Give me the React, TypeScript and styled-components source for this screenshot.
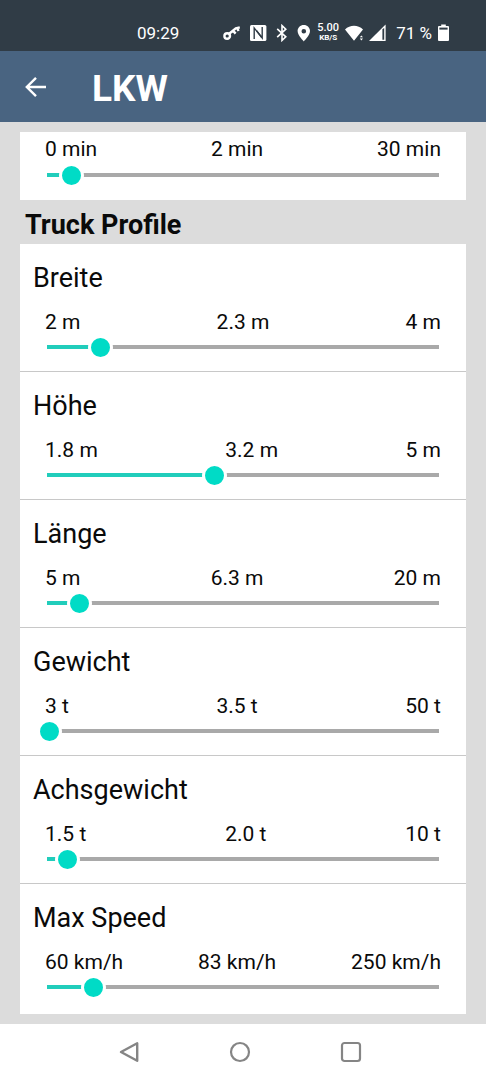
import React, { useId, useState } from "react";
import styled, { createGlobalStyle } from "styled-components";

const GlobalStyle = createGlobalStyle`
  *, *::before, *::after { box-sizing: border-box; }
  body {
    margin: 0;
    background: #dcdcdc;
    color: #0a0a0a;
    font-family: Roboto, "Liberation Sans", sans-serif;
  }
`;

const Screen = styled.div`
  display: flex;
  flex-direction: column;
  min-height: 100vh;
`;

const StatusBar = styled.div`
  display: flex;
  align-items: center;
  justify-content: space-between;
  height: 51px;
  padding: 14px 37px 0 137px;
  background: #303c46;
  color: #fff;
  font-size: 17px;
  line-height: 20px;
`;

const StatusIcons = styled.div`
  display: flex;
  align-items: center;
  gap: 6px;

  svg {
    display: block;
  }
`;

const Throughput = styled.div`
  width: 22px;
  font-size: 11px;
  font-weight: 500;
  line-height: 10px;
  text-align: center;
  white-space: nowrap;
`;

const ThroughputUnit = styled.div`
  font-size: 8px;
  font-weight: 700;
  line-height: 9px;
`;

const BatteryLevel = styled.span`
  white-space: nowrap;
`;

const AppBar = styled.header`
  display: flex;
  align-items: center;
  gap: 44px;
  height: 71px;
  padding: 0 24px;
  background: #496481;
  color: #fff;
`;

const BackButton = styled.button`
  display: flex;
  padding: 0;
  border: 0;
  background: none;
  color: inherit;
`;

const Title = styled.h1`
  margin: 0;
  padding-top: 4px;
  font-size: 37px;
  font-weight: 700;
  line-height: 44px;
`;

const Content = styled.main`
  flex: 1;
  padding: 10px 20px;
`;

const Card = styled.section<{ $cut?: boolean }>`
  padding-bottom: ${(p) => (p.$cut ? 0 : 2)}px;
  background: #fff;
`;

const SectionTitle = styled.h2`
  margin: 0;
  padding: 9px 5px 3px;
  font-size: 27px;
  font-weight: 700;
  line-height: 32px;
`;

const Row = styled.div<{ $compact?: boolean }>`
  padding: ${(p) => (p.$compact ? 5 : 18)}px 13px 11px;
  border-bottom: 1px solid #c8c8c8;

  &:last-child {
    border-bottom-color: transparent;
  }
`;

const RowLabel = styled.label`
  display: block;
  margin-bottom: 16px;
  font-size: 27px;
  line-height: 32px;
`;

const Values = styled.div<{ $compact?: boolean }>`
  display: flex;
  justify-content: space-between;
  padding: 0 12px ${(p) => (p.$compact ? 1 : 0)}px;
  font-size: 21px;
  line-height: 25px;
`;

const Slider = styled.input`
  appearance: none;
  display: block;
  width: 100%;
  height: 25px;
  margin: 0;
  background:
    linear-gradient(#21cdbb, #21cdbb) 14px 10px / calc((100% - 25px) * var(--filled)) 4px no-repeat,
    linear-gradient(#a9a9a9, #a9a9a9) 14px 10px / calc(100% - 28px) 4px no-repeat;

  &::-webkit-slider-thumb {
    appearance: none;
    width: 25px;
    height: 25px;
    border: 3px solid #fff;
    border-radius: 50%;
    background: #00dbc6;
  }
`;

const NavBar = styled.nav`
  display: flex;
  align-items: center;
  justify-content: center;
  gap: 87px;
  height: 56px;
  padding-right: 6px;
  background: #fff;
`;

const NavButton = styled.button`
  display: flex;
  padding: 0;
  border: 0;
  background: none;
  color: #858585;
`;

type Setting = {
  label: string;
  min: number;
  max: number;
  initial: number;
  unit: string;
  digits: number;
};

const profile: Setting[] = [
  { label: "Breite", min: 2, max: 4, initial: 2.28, unit: "m", digits: 1 },
  { label: "Höhe", min: 1.8, max: 5, initial: 3.17, unit: "m", digits: 1 },
  { label: "Länge", min: 5, max: 20, initial: 6.31, unit: "m", digits: 1 },
  { label: "Gewicht", min: 3, max: 50, initial: 3.5, unit: "t", digits: 1 },
  { label: "Achsgewicht", min: 1.5, max: 10, initial: 1.97, unit: "t", digits: 1 },
  { label: "Max Speed", min: 60, max: 250, initial: 83, unit: "km/h", digits: 0 },
];

const pause: Setting = { label: "Minuten", min: 0, max: 30, initial: 2, unit: "min", digits: 0 };

function SettingRow({ setting, compact }: { setting: Setting; compact?: boolean }) {
  const { label, min, max, initial, unit, digits } = setting;
  const [value, setValue] = useState(initial);
  const id = useId();
  const style = { "--filled": (value - min) / (max - min) } as React.CSSProperties;

  return (
    <Row $compact={compact}>
      {!compact && <RowLabel htmlFor={id}>{label}</RowLabel>}
      <Values $compact={compact}>
        <span>{min} {unit}</span>
        <span>{value.toFixed(digits)} {unit}</span>
        <span>{max} {unit}</span>
      </Values>
      <Slider
        id={id}
        type="range"
        aria-label={compact ? label : undefined}
        min={min}
        max={max}
        step="any"
        value={value}
        style={style}
        onChange={(e) => setValue(Number(e.target.value))}
      />
    </Row>
  );
}

function KeyIcon() {
  return (
    <svg width="21" height="18" viewBox="0 0 21 18" fill="none" stroke="#fff">
      <circle cx="4.2" cy="12" r="2.8" strokeWidth="2.4" />
      <path d="M6.2 9.8 12.8 4.4 16.8 3.4M10 6.6l2.6 3M14 4l1.6 3" strokeWidth="2.4" />
    </svg>
  );
}

function NfcIcon() {
  return (
    <svg width="19" height="18" viewBox="0 0 19 18">
      <rect x="0" y="1" width="16.4" height="16" rx="1.5" fill="#fff" />
      <path d="M4.2 15V4l7.600 9.500" fill="none" stroke="#303c46" strokeWidth="1.4" />
      <path d="M12.200 3v11L6.600 6.800" fill="none" stroke="#303c46" strokeWidth="1.4" />
    </svg>
  );
}

function BluetoothIcon() {
  return (
    <svg width="16" height="18" viewBox="0 0 16 18" fill="none" stroke="#fff" strokeWidth="1.6">
      <path d="M2.2 4.800 10.800 12.800 7 16.400V1.600l3.800 3.600L2.200 13.200" />
    </svg>
  );
}

function PinIcon() {
  return (
    <svg width="14" height="18" viewBox="0 0 14 18">
      <path
        d="M6.8 1C3.3 1 .6 3.7.6 7.1c0 4.3 6.2 10.3 6.2 10.3S13 11.4 13 7.1C13 3.7 10.3 1 6.8 1Zm0 8.5a2.3 2.3 0 1 1 0-4.6 2.3 2.3 0 0 1 0 4.6Z"
        fill="#fff"
      />
    </svg>
  );
}

function WifiIcon() {
  return (
    <svg width="18" height="18" viewBox="0 0 18 18" fill="#fff">
      <path d="M0 5.4C5 .4 13 .4 18 5.400L14.200 10.200L9 16.800Z" />
      <path d="M14.800 13.200 16.400 11.400 18 13.200ZM14.800 14.600l1.600 1.800L18 14.600Z" />
    </svg>
  );
}

function SignalIcon() {
  return (
    <svg width="21" height="18" viewBox="0 0 21 18">
      <path d="M0 17 16.6 0.6V17Z" fill="#fff" />
      <path d="M13.4 5.200v10.600h1.800V4Z" fill="#303c46" />
    </svg>
  );
}

function BatteryIcon() {
  return (
    <svg width="11" height="18" viewBox="0 0 11 18">
      <path d="M3.2 0.5h4.6V2H10a1 1 0 0 1 1 1v13a1 1 0 0 1-1 1H1a1 1 0 0 1-1-1V3a1 1 0 0 1 1-1h2.2Z" fill="#fff" />
      <path d="M1.4 3.6h8.2v2H1.4Z" fill="#303c46" />
    </svg>
  );
}

export default function App() {
  return (
    <Screen>
      <GlobalStyle />
      <StatusBar>
        <span>09:29</span>
        <StatusIcons>
          <KeyIcon />
          <NfcIcon />
          <BluetoothIcon />
          <PinIcon />
          <Throughput>
            5.00
            <ThroughputUnit>KB/S</ThroughputUnit>
          </Throughput>
          <WifiIcon />
          <SignalIcon />
          <BatteryLevel>71 %</BatteryLevel>
          <BatteryIcon />
        </StatusIcons>
      </StatusBar>
      <AppBar>
        <BackButton aria-label="Zurück">
          <svg width="24" height="24" viewBox="0 0 24 24" fill="none" stroke="currentColor" strokeWidth="2.4">
            <path d="M22 12H3.5M12 2.8 2.8 12l9.2 9.2" />
          </svg>
        </BackButton>
        <Title>LKW</Title>
      </AppBar>
      <Content>
        <Card $cut>
          <SettingRow setting={pause} compact />
        </Card>
        <SectionTitle>Truck Profile</SectionTitle>
        <Card>
          {profile.map((setting) => (
            <SettingRow key={setting.label} setting={setting} />
          ))}
        </Card>
      </Content>
      <NavBar>
        <NavButton aria-label="Zurück">
          <svg width="24" height="24" viewBox="0 0 24 24" fill="none" stroke="currentColor" strokeWidth="2.4" strokeLinejoin="round">
            <path d="M20.2 3.3v17.4L4 12Z" />
          </svg>
        </NavButton>
        <NavButton aria-label="Startbildschirm">
          <svg width="24" height="24" viewBox="0 0 24 24" fill="none" stroke="currentColor" strokeWidth="2.2">
            <circle cx="12" cy="12" r="9" />
          </svg>
        </NavButton>
        <NavButton aria-label="Übersicht">
          <svg width="24" height="24" viewBox="0 0 24 24" fill="none" stroke="currentColor" strokeWidth="2.2">
            <rect x="3" y="3" width="18" height="18" rx="2.5" />
          </svg>
        </NavButton>
      </NavBar>
    </Screen>
  );
}
